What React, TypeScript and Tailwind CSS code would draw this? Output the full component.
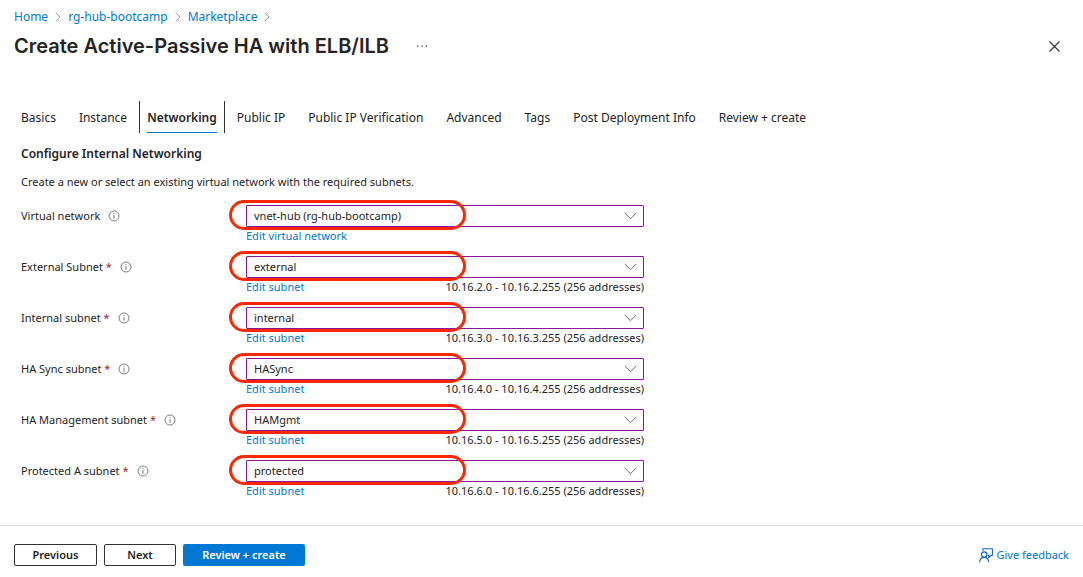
import React from "react";

const crumbs = ["Home", "rg-hub-bootcamp", "Marketplace"];

const tabs = [
  "Basics",
  "Instance",
  "Networking",
  "Public IP",
  "Public IP Verification",
  "Advanced",
  "Tags",
  "Post Deployment Info",
  "Review + create",
];

type Field = {
  id: string;
  label: string;
  required: boolean;
  value: string;
  link: string;
  range?: string;
};

const fields: Field[] = [
  { id: "vnet", label: "Virtual network", required: false, value: "vnet-hub (rg-hub-bootcamp)", link: "Edit virtual network" },
  { id: "external", label: "External Subnet", required: true, value: "external", link: "Edit subnet", range: "10.16.2.0 - 10.16.2.255 (256 addresses)" },
  { id: "internal", label: "Internal subnet", required: true, value: "internal", link: "Edit subnet", range: "10.16.3.0 - 10.16.3.255 (256 addresses)" },
  { id: "hasync", label: "HA Sync subnet", required: true, value: "HASync", link: "Edit subnet", range: "10.16.4.0 - 10.16.4.255 (256 addresses)" },
  { id: "hamgmt", label: "HA Management subnet", required: true, value: "HAMgmt", link: "Edit subnet", range: "10.16.5.0 - 10.16.5.255 (256 addresses)" },
  { id: "protected", label: "Protected A subnet", required: true, value: "protected", link: "Edit subnet", range: "10.16.6.0 - 10.16.6.255 (256 addresses)" },
];

function CrumbChevron() {
  return (
    <svg width="6" height="10" viewBox="0 0 6 10" fill="none" stroke="#979593" strokeWidth="0.9" aria-hidden="true">
      <path d="M0.7 0.7 5 5 0.7 9.3" />
    </svg>
  );
}

function InfoIcon() {
  return (
    <svg width="12" height="12" viewBox="0 0 12 12" fill="none" stroke="#605e5c" aria-hidden="true">
      <circle cx="6" cy="6" r="5" strokeWidth="0.8" />
      <path d="M6 5.200V8.700M6 3.200V4.200" strokeWidth="0.9" />
    </svg>
  );
}

function FieldRow({ field }: { field: Field }) {
  return (
    <div className="flex h-[51px] items-start">
      <div className="flex h-[22px] w-[225px] shrink-0 items-center">
        <label htmlFor={field.id}>
          {field.label}
          {field.required && <span className="text-[#a4262c]"> *</span>}
        </label>
        <button type="button" aria-label={`About ${field.label}`} className="ml-2">
          <InfoIcon />
        </button>
      </div>
      <div className="w-[398px]">
        <div className="relative">
          <select
            id={field.id}
            defaultValue={field.value}
            className="block h-[22px] w-full appearance-none rounded-[1px] border border-[#881798] bg-white px-[7px] text-[#252423] outline-none"
          >
            <option>{field.value}</option>
          </select>
          <svg
            className="pointer-events-none absolute top-[7px] right-[7px]"
            width="13"
            height="8"
            viewBox="0 0 13 8"
            fill="none"
            stroke="#706e6c"
            aria-hidden="true"
          >
            <path d="M0.7 0.9 6.5 6.7 12.3 0.9" />
          </svg>
          <div className="pointer-events-none absolute -top-[5px] -left-[17px] h-[30px] w-[237px] rounded-full border-3 border-[#ff2600]" />
        </div>
        <div className="relative flex h-[18px] items-center justify-between leading-[18px]">
          <a href="#" className="text-[#0078d4]">{field.link}</a>
          {field.range && <span>{field.range}</span>}
        </div>
      </div>
    </div>
  );
}

export default function App() {
  return (
    <div className="min-h-screen bg-white font-['Noto_Sans','Open_Sans',sans-serif] text-[12px] text-[#252423]">
      <header className="px-[14px] pt-2">
        <nav aria-label="Breadcrumb" className="flex h-[18px] items-center gap-[7px] text-[#0078d4]">
          {crumbs.map((c) => (
            <React.Fragment key={c}>
              <a href="#">{c}</a>
              <CrumbChevron />
            </React.Fragment>
          ))}
        </nav>
        <div className="flex h-10 items-center">
          <h1 className="font-[Inter,sans-serif] text-[20px] font-semibold">
            Create Active-Passive HA with ELB/ILB
          </h1>
          <button type="button" aria-label="More" className="ml-7">
            <svg width="10" height="2" viewBox="0 0 10 2" fill="#323130" aria-hidden="true">
              <path d="M0 .4h1.300v1.300H0zM4.400 .4h1.300v1.300H4.400zM8.700 .4H10v1.300H8.700z" />
            </svg>
          </button>
          <button type="button" aria-label="Close" className="mr-[9px] ml-auto">
            <svg width="11" height="11" viewBox="0 0 11 11" fill="none" stroke="#323130" strokeWidth="1.1" aria-hidden="true">
              <path d="M.5 .5l10 10M10.5 .5l-10 10" />
            </svg>
          </button>
        </div>
      </header>

      <main className="px-[21px] pt-[35px]">
        <div role="tablist" className="flex h-8 items-stretch gap-[23px]">
          {tabs.map((t) =>
            t === "Networking" ? (
              <button
                key={t}
                type="button"
                role="tab"
                aria-selected="true"
                className="-mx-[11px] flex border-x border-[#323130] px-[7px] font-semibold"
              >
                <span className="flex h-full items-center border-b border-[#0078d4] pt-[3px]">{t}</span>
              </button>
            ) : (
              <button key={t} type="button" role="tab" aria-selected="false" className="pt-[2px]">
                {t}
              </button>
            ),
          )}
        </div>
        <h2 className="mt-3 leading-[18px] font-semibold">Configure Internal Networking</h2>
        <p className="mt-[10px] text-[11px] leading-[18px]">
          Create a new or select an existing virtual network with the required subnets.
        </p>
        <form className="mt-[14px] text-[11px]">
          {fields.map((f) => (
            <FieldRow key={f.id} field={f} />
          ))}
        </form>
      </main>

      <footer className="mt-[14px] flex items-center gap-[7px] border-t border-[#dcdcdc] px-[14px] pt-[18px] pb-[10px] text-[11px]">
        <button type="button" className="h-[22px] w-[83px] rounded-[2px] border border-[#323130] font-semibold">Previous</button>
        <button type="button" className="h-[22px] w-[72px] rounded-[2px] border border-[#323130] font-semibold">Next</button>
        <button type="button" className="h-[22px] w-[122px] rounded-[2px] bg-[#0078d4] font-semibold text-white">Review + create</button>
        <a href="#" className="ml-auto flex items-center gap-[3px] text-[#0078d4]">
          <svg width="14" height="15" viewBox="0 0 14 15" fill="none" stroke="#1664c0" strokeWidth="1.1" aria-hidden="true">
            <path d="M3.9 3V.7h9.5v6.6h-1.3L9.8 9.5V7.3H8.6" />
            <circle cx="5.2" cy="6.6" r="2.7" />
            <path d="M.6 14.2c.3-3 2.200-4.800 4.600-4.800s4.300 1.800 4.600 4.800" />
          </svg>
          Give feedback
        </a>
      </footer>
    </div>
  );
}
